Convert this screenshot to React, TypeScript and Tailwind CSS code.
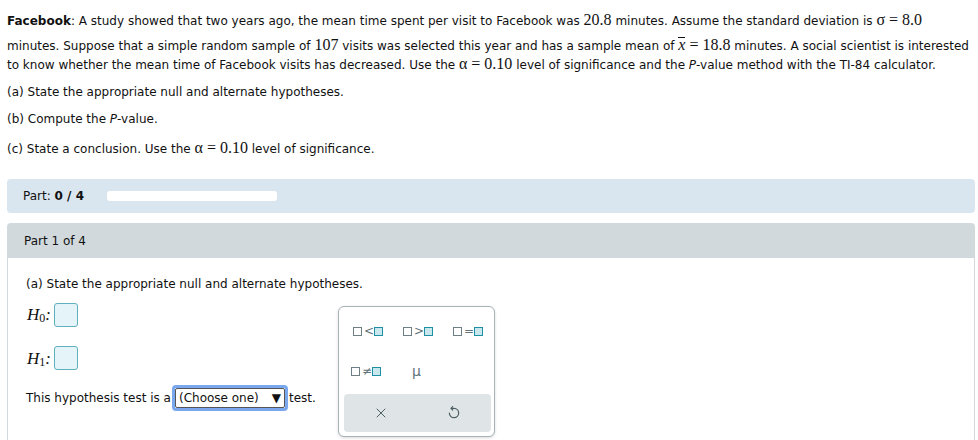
import { X } from "lucide-react";

const serif = "font-['Liberation_Serif',serif]";

const Sq = ({ filled }: { filled?: boolean }) => (
  <span
    className={
      filled
        ? "inline-block w-[9px] h-[9px] border border-[#1f8fa3] bg-[#c8e8ee]"
        : "inline-block w-[9px] h-[9px] border border-[#6e7f85] bg-white"
    }
  />
);

const Rel = ({ op }: { op: string }) => (
  <span className="flex items-center gap-[2px] text-[#5f7379] text-[12px] leading-none">
    <Sq />
    <span className="w-[8px] text-center">{op}</span>
    <Sq filled />
  </span>
);

const AnswerBox = () => (
  <span className="inline-block w-[24px] h-[24px] rounded-[3px] border border-[#5fb0bd] bg-[#e5f4f8]" />
);

const UndoIcon = () => (
  <svg width="16" height="16" viewBox="0 0 24 24" fill="none" stroke="currentColor" strokeWidth="1.8" strokeLinecap="round" strokeLinejoin="round">
    <path d="M8 5h4a7 7 0 1 1-7 7" />
    <path d="M10 2.5 7.5 5 10 7.5" />
  </svg>
);

export default function App() {
  return (
    <div className="w-[978px] h-[440px] overflow-hidden bg-white text-[12px] text-[#111] font-['DejaVu_Sans','Verdana',sans-serif]">
      {/* Question */}
      <div className="px-[7px] pt-[9px] whitespace-nowrap">
        <div className="leading-[22px]">
          <b>Facebook</b>: A study showed that two years ago, the mean time spent per visit to Facebook was{" "}
          <span className={`${serif} text-[16px]`}>20.8</span> minutes. Assume the standard deviation is{" "}
          <span className={`${serif} text-[16px]`}>σ = 8.0</span>
        </div>
        <div className="mt-[2px] leading-[22px]">
          minutes. Suppose that a simple random sample of <span className={`${serif} text-[16px]`}>107</span> visits
          was selected this year and has a sample mean of{" "}
          <span className={`${serif} text-[16px]`}>
            <span className="italic border-t border-[#111] leading-[14px] inline-block">x</span> = 18.8
          </span>{" "}
          minutes. A social scientist is interested
        </div>
        <div className="-mt-[2px] leading-[18px]">
          to know whether the mean time of Facebook visits has decreased. Use the{" "}
          <span className={`${serif} text-[16px]`}>α = 0.10</span> level of significance and the <i>P</i>-value
          method with the TI-84 calculator.
        </div>
      </div>

      <div className="px-[7px] whitespace-nowrap">
        <p className="mt-[7px] leading-[22px]">(a) State the appropriate null and alternate hypotheses.</p>
        <p className="mt-[5px] leading-[22px]">
          (b) Compute the <i>P</i>-value.
        </p>
        <p className="mt-[7px] leading-[22px]">
          (c) State a conclusion. Use the <span className={`${serif} text-[16px]`}>α = 0.10</span> level of
          significance.
        </p>
      </div>

      <div className="ml-[7px] mr-[3px] mt-[19px]">
        {/* Progress */}
        <div className="h-[34px] rounded-[4px] bg-[#dae6ef] flex items-center pl-[16px]">
          <span>
            Part: <b>0 / 4</b>
          </span>
          <span className="ml-[23px] w-[170px] h-[10px] rounded-[3px] bg-white" />
        </div>

        {/* Part panel */}
        <div className="mt-[10px]">
          <div className="h-[35px] rounded-t-[4px] bg-[#d1d9dc] flex items-center pl-[17px]">Part 1 of 4</div>
          <div className="h-[200px] border-x border-[#d1d9dc] flex">
            <div className="w-[330px] pl-[18px] pt-[17px] whitespace-nowrap">
              <p className="leading-[18px]">(a) State the appropriate null and alternate hypotheses.</p>
              <div className="mt-[9px] flex items-center gap-[7px] pl-[1px]">
                <span className={`${serif} text-[17px] italic w-[20px]`}>
                  H<sub className="not-italic text-[12px] relative top-[2px]">0</sub>:
                </span>
                <AnswerBox />
              </div>
              <div className="mt-[18px] flex items-center gap-[7px] pl-[1px]">
                <span className={`${serif} text-[17px] italic w-[20px]`}>
                  H<sub className="not-italic text-[12px] relative top-[2px]">1</sub>:
                </span>
                <AnswerBox />
              </div>
              <div className="mt-[14px] flex items-center">
                <span>This hypothesis test is a</span>
                <span className="ml-[1px] rounded-[4px] border-[3px] border-[#7aa8ef]">
                  <span className="flex items-center h-[20px] px-[3px] border border-[#555] rounded-[2px] bg-white gap-[13px]">
                    (Choose one) <span className="text-[12px]">▼</span>
                  </span>
                </span>
                <span className="ml-[1px]">test.</span>
              </div>
            </div>

            {/* Palette */}
            <div className="mt-[48px] w-[157px] h-[131px] rounded-[6px] border border-[#a6b3b7] shadow-[0_1px_3px_rgba(0,0,0,0.15)] bg-white flex flex-col pl-[5px] pr-[3px] pb-[4px]">
              <div className="flex gap-[20px] pl-[9px] pt-[18px]">
                <Rel op="<" />
                <Rel op=">" />
                <Rel op="=" />
              </div>
              <div className="flex items-center pl-[7px] pt-[27px] gap-[31px]">
                <Rel op="≠" />
                <span className="text-[#5f7379] text-[14px] leading-none">μ</span>
              </div>
              <div className="mt-auto h-[38px] rounded-[4px] bg-[#dfe5e7] flex items-center justify-around text-[#4d5f64]">
                <X size={16} strokeWidth={1.5} />
                <UndoIcon />
              </div>
            </div>
          </div>
        </div>
      </div>
    </div>
  );
}
